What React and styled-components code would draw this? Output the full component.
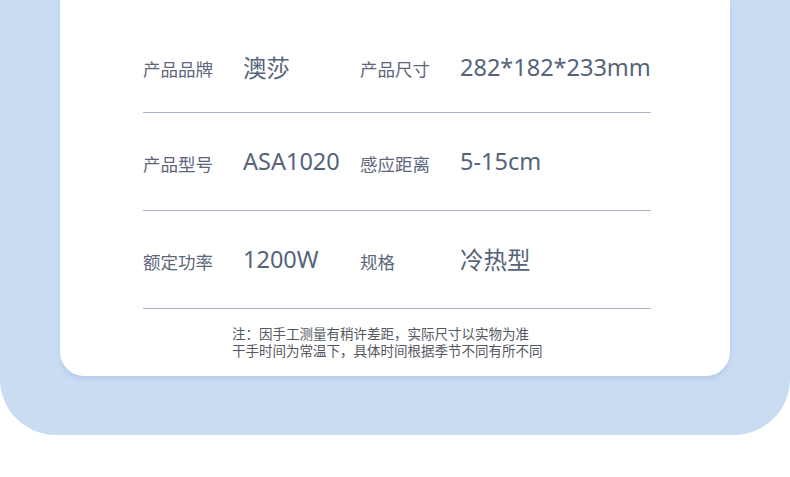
import React from 'react';
import styled, { createGlobalStyle } from 'styled-components';

const GlobalStyle = createGlobalStyle`
  html, body {
    margin: 0;
    padding: 0;
    background: #ffffff;
  }
  body {
    font-family: "Noto Sans", "Noto Sans CJK SC", sans-serif;
  }
`;

const specs = [
  [
    { label: '产品品牌', value: '澳莎' },
    { label: '产品尺寸', value: '282*182*233mm' },
  ],
  [
    { label: '产品型号', value: 'ASA1020' },
    { label: '感应距离', value: '5-15cm' },
  ],
  [
    { label: '额定功率', value: '1200W' },
    { label: '规格', value: '冷热型' },
  ],
];

export default function App() {
  return (
    <>
      <GlobalStyle />
      <Panel>
        <Card>
          <SpecList>
            {specs.map((row, i) => (
              <SpecRow key={i} first={i === 0}>
                {row.map((item) => (
                  <React.Fragment key={item.label}>
                    <Label>{item.label}</Label>
                    <Value>{item.value}</Value>
                  </React.Fragment>
                ))}
              </SpecRow>
            ))}
          </SpecList>
          <Note>
            <p>注：因手工测量有稍许差距，实际尺寸以实物为准</p>
            <p>干手时间为常温下，具体时间根据季节不同有所不同</p>
          </Note>
        </Card>
      </Panel>
    </>
  );
}

const Panel = styled.div`
  background: #cadcf2;
  padding: 0 60px 59px;
  border-radius: 0 0 56px 56px;
`;

const Card = styled.div`
  background: #ffffff;
  border-radius: 0 0 24px 24px;
  padding: 0 79px 16px 83px;
  box-shadow: 0 3px 4px rgba(130, 165, 215, 0.3);
`;

const SpecList = styled.div`
  display: flex;
  flex-direction: column;
`;

const SpecRow = styled.div`
  display: grid;
  grid-template-columns: 100px 117px 100px 1fr;
  align-items: center;
  box-sizing: border-box;
  height: ${(p) => (p.first ? '113px' : '98px')};
  padding-top: ${(p) => (p.first ? '25px' : '3px')};
  border-bottom: 1px solid #a9b5c9;
`;

const Label = styled.span`
  font-size: 17.5px;
  color: #5d6779;
  white-space: nowrap;
`;

const Value = styled.span`
  font-size: 23.5px;
  color: #56637a;
  white-space: nowrap;
  position: relative;
  top: -2px;
`;

const Note = styled.div`
  margin: 17px 0 0 89px;
  font-size: 13.5px;
  line-height: 17px;
  color: #54585f;

  p {
    margin: 0;
    white-space: nowrap;
  }
`;
